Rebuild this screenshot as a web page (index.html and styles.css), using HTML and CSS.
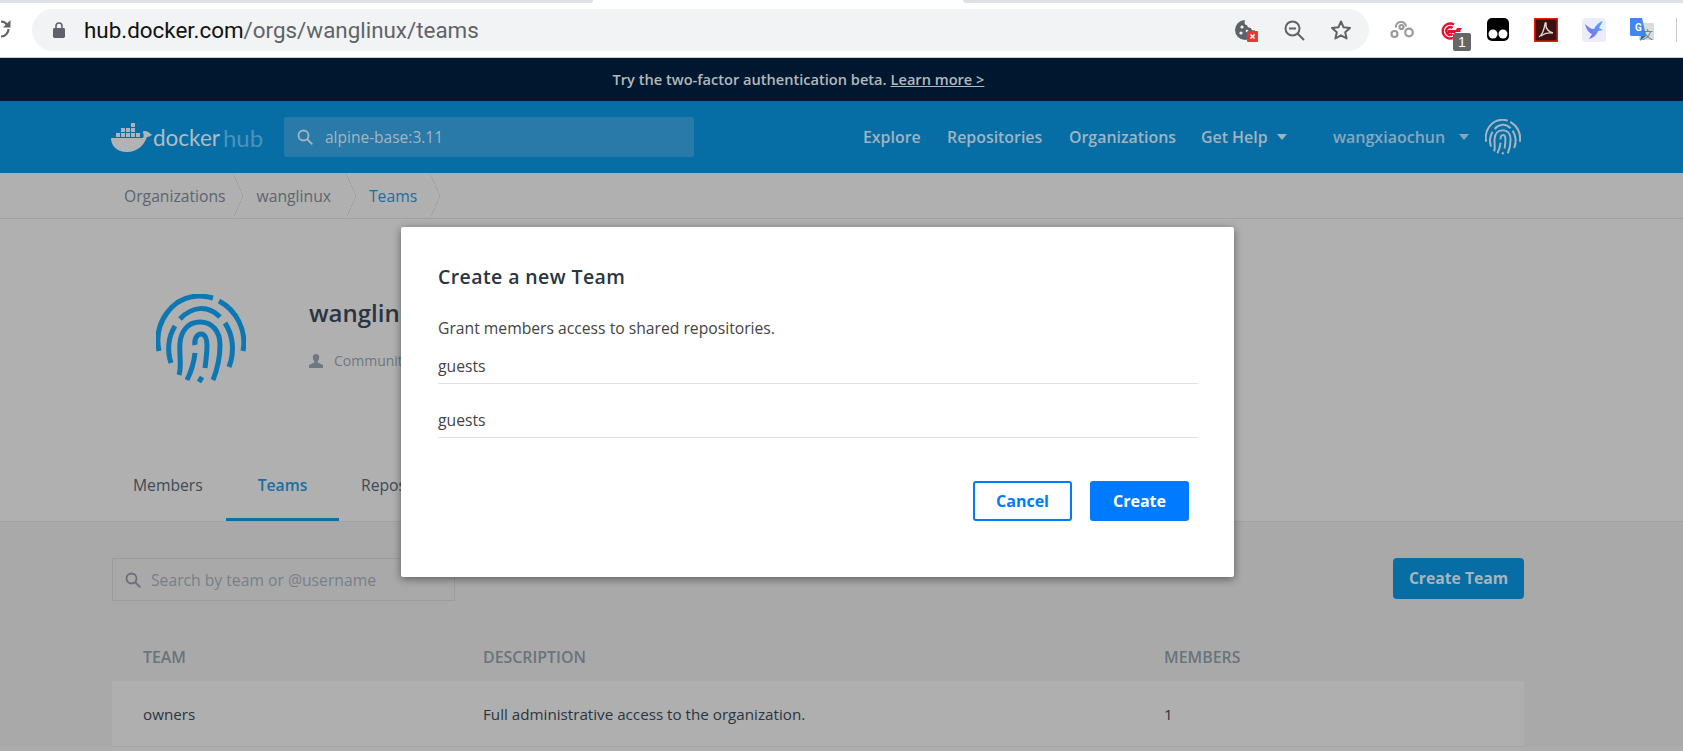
FILE: index.html
```html
<!DOCTYPE html>
<html lang="en">
<head>
    <meta charset="UTF-8">
    <title>Teams - Docker Hub</title>
    <link rel="stylesheet" href="styles.css">
</head>
<body>
    <!-- browser toolbar -->
    <div class="tabstrip">
        <div class="tab-curve"></div>
        <div class="tab-open"></div>
        <div class="tab-curve tab-curve-right"></div>
    </div>
    <div class="toolbar">
        <svg class="reload" width="11" height="22" viewBox="0 0 11 22"><path d="M1 3.5A7.5 7.5 0 0 1 7 6.500M8.500 11A7.5 7.5 0 0 1 1 18.500" fill="none" stroke="#5f6368" stroke-width="2.200"/><path d="M10.500 2v7.500H3z" fill="#5f6368"/></svg>
        <div class="omnibox">
            <svg class="lock" width="12" height="16" viewBox="0 0 12 16"><path d="M3 6V4a3 3 0 0 1 6 0v2" fill="none" stroke="#5f6368" stroke-width="1.600"/><rect y="6" width="12" height="10" rx="1.400" fill="#5f6368"/></svg>
            <span class="url"><b>hub.docker.com</b>/orgs/wanglinux/teams</span>
            <div class="omni-icons">
                <svg width="24" height="23" viewBox="0 0 24 23"><path d="M10 1a10 10 0 1 0 10 10c-2 1-4 0-4-2-2 0-4-1-4-3-2 0-3-2-2-5z" fill="#5f6368"/><circle cx="7" cy="8" r="1.600" fill="#f1f3f4"/><circle cx="6" cy="14" r="1.600" fill="#f1f3f4"/><circle cx="12" cy="12" r="1.300" fill="#f1f3f4"/><rect x="12" y="12" width="11" height="11" rx="1" fill="#e53935"/><path d="M15.500 15.500l4 4m0-4l-4 4" stroke="#fff" stroke-width="1.500"/></svg>
                <svg width="21" height="21" viewBox="0 0 21 21"><circle cx="8.500" cy="8.500" r="7" fill="none" stroke="#5f6368" stroke-width="2"/><path d="M5 8.500h7M13.500 13.500l6.500 6.500" stroke="#5f6368" stroke-width="2"/></svg>
                <svg width="22" height="22" viewBox="0 0 22 22"><path d="M11 2.500l2.600 5.800 6.400.7-4.800 4.200 1.400 6.300L11 16.300l-5.600 3.200 1.400-6.300L2 9l6.400-.7z" fill="none" stroke="#5f6368" stroke-width="2" stroke-linejoin="round"/></svg>
            </div>
        </div>
        <div class="extensions">
            <svg class="ext-chain" width="24" height="18" viewBox="0 0 24 18"><g fill="none" stroke="#9a9a9a" stroke-width="2.200"><path d="M6 6.500a5 5 0 0 1 10-1"/><circle cx="11.500" cy="6" r="2"/><circle cx="19" cy="11.500" r="3.800"/><circle cx="4.500" cy="13" r="3"/></g></svg>
            <div class="ext-target">
                <svg width="24" height="18" viewBox="0 0 24 18"><g fill="none" stroke="#e8112d" stroke-width="2.400"><path d="M15 2.500a7.500 7.500 0 1 0 0 13"/><path d="M13.500 6a3.800 3.800 0 1 0 0 6"/></g><path d="M9 8h8l1-2h5l-2 3 1 1h-5l-1 1H9z" fill="#e8112d"/></svg>
                <span class="ext-badge">1</span>
            </div>
            <svg class="ext-tamper" width="22" height="23" viewBox="0 0 22 23"><rect width="22" height="23" rx="5" fill="#000"/><circle cx="6" cy="16" r="4.500" fill="#fff"/><circle cx="16" cy="16" r="4.500" fill="#fff"/></svg>
            <svg class="ext-adobe" width="24" height="24" viewBox="0 0 24 24"><rect x=".75" y=".75" width="22.500" height="22.500" fill="#3a1212" stroke="#f41a00" stroke-width="1.500"/><path d="M5 19c3-2 5-7 6-13 .3-2 1.500-1.500 1 .5-.5 4 3 8 7 8.500-4-.5-9 .5-12 3" fill="none" stroke="#e7d6d0" stroke-width="1.400"/></svg>
            <svg class="ext-bird" width="24" height="24" viewBox="0 0 24 24"><defs><linearGradient id="birdFill" x1="1" y1="0" x2="0" y2="1"><stop offset="0" stop-color="#45b0f5"/><stop offset="1" stop-color="#8a63f0"/></linearGradient></defs><rect width="24" height="24" rx="4" fill="#ecedfb"/><path d="M21 3l-4 7 4 2-5 1c-1 4-5 7-9 8l3-5c-3-1-6-5-7-10 3 3 6 5 9 5 2-4 5-7 9-8z" fill="url(#birdFill)"/></svg>
            <svg class="ext-translate" width="24" height="24" viewBox="0 0 24 24"><rect x="9" y="5" width="15" height="17" fill="#dcdcdc"/><path d="M0 0h12l4 18H1.500a1.500 1.500 0 0 1-1.500-1.500z" fill="#4285f4"/><path d="M11 18l-1 5 6-5z" fill="#3367c5"/></svg>
            <span class="ext-g">G</span>
            <span class="ext-wen">文</span>
            <div class="ext-sep"></div>
        </div>
    </div>

    <div class="banner">
        <span>Try the two-factor authentication beta.</span> <a class="banner-link">Learn more &gt;</a>
    </div>

    <header class="topnav">
        <div class="logo">
            <svg width="41" height="29" viewBox="0 0 41 29"><g fill="#b0b4b6"><path d="M0 15h32c1-2 1-4-.5-6 1.500-1.500 4-1 5.500 0 1 .5 2.500 2 4 2.500-1 1.500-3 2.500-5 2.500-3 8-9 15-20 15C6 29 0 23 0 15z"/><rect x="5" y="10" width="4" height="4"/><rect x="10" y="10" width="4" height="4"/><rect x="15" y="10" width="4" height="4"/><rect x="20" y="10" width="4" height="4"/><rect x="25" y="10" width="4" height="4"/><rect x="10" y="5" width="4" height="4"/><rect x="15" y="5" width="4" height="4"/><rect x="20" y="5" width="4" height="4"/><rect x="20" y="0" width="4" height="4"/></g></svg>
            <span class="logo-docker">docker</span><span class="logo-hub">hub</span>
        </div>
        <div class="nav-search">
            <svg width="16" height="16" viewBox="0 0 16 16"><circle cx="6.500" cy="6.500" r="5" fill="none" stroke="#a9b5bc" stroke-width="1.800"/><path d="M10 10l5.300 5.300" stroke="#a9b5bc" stroke-width="1.800"/></svg>
            <span>alpine-base:3.11</span>
        </div>
        <nav class="nav-links">
            <a class="link-explore">Explore</a>
            <a class="link-repos">Repositories</a>
            <a class="link-orgs">Organizations</a>
            <a class="link-help">Get Help <i class="caret"></i></a>
        </nav>
        <div class="user-menu">
            <span class="username">wangxiaochun</span>
            <i class="caret"></i>
            <svg class="fp-small" width="36" height="36" viewBox="0 0 90 90"><use href="#fingerprint" stroke="#a3b5c0"/></svg>
        </div>
    </header>

    <div class="crumbs">
        <a class="crumb">Organizations</a>
        <a class="crumb">wanglinux</a>
        <a class="crumb crumb-active">Teams</a>
    </div>

    <section class="org-head">
        <svg class="fp-big" width="90" height="90" viewBox="0 0 90 90">
            <g id="fingerprint" fill="none" stroke-width="5">
                <path d="M3 57C-3 28 17 2 44 2c5 0 9 1 13 2"/>
                <path d="M63 7C80 16 91 36 87 57"/>
                <path d="M24 25C36 12 52 11 64 23"/>
                <path d="M19 32C12 43 11 57 15 69"/>
                <path d="M69 29C77 41 79 57 73 73"/>
                <path d="M23 81C26 72 23 62 24 49C25 36 33 28 44 28C56 28 64 37 64 51C64 64 61 76 57 86"/>
                <path d="M31 86C35 78 38 68 39 59"/>
                <path d="M39 51C38 45 41 40 45 40C49 40 51 45 51 51C51 59 50 66 49 74"/>
                <path d="M43 88l3-5"/>
            </g>
        </svg>
        <div class="org-info">
            <h1 class="org-name">wanglinux</h1>
            <div class="org-type">
                <svg width="14" height="14" viewBox="0 0 14 14"><path d="M7 0c2 0 3.200 1.500 3.200 3.500 0 1.600-.8 3-1.600 3.700v1.300L14 11v3H0v-3l5.400-2.500V7.200C4.600 6.500 3.800 5.100 3.800 3.500 3.800 1.500 5 0 7 0z" fill="#6d7880"/></svg>
                <span>Community</span>
            </div>
        </div>
    </section>

    <div class="tabs">
        <a class="page-tab">Members</a>
        <a class="page-tab page-tab-active">Teams</a>
        <a class="page-tab">Repositories</a>
    </div>

    <main class="content">
        <div class="team-tools">
            <div class="team-search">
                <svg width="16" height="16" viewBox="0 0 16 16"><circle cx="6.500" cy="6.500" r="5" fill="none" stroke="#687077" stroke-width="1.800"/><path d="M10 10l5.300 5.300" stroke="#687077" stroke-width="1.800"/></svg>
                <span>Search by team or @username</span>
            </div>
            <button class="btn-team" type="button">Create Team</button>
        </div>
        <div class="table-head">
            <div class="col-team">TEAM</div>
            <div class="col-desc">DESCRIPTION</div>
            <div>MEMBERS</div>
        </div>
        <div class="table-row">
            <div class="col-team">owners</div>
            <div class="col-desc">Full administrative access to the organization.</div>
            <div>1</div>
        </div>
    </main>

    <div class="modal">
        <h2 class="modal-title">Create a new Team</h2>
        <p class="modal-text">Grant members access to shared repositories.</p>
        <div class="field">guests</div>
        <div class="field">guests</div>
        <div class="modal-actions">
            <button class="btn btn-cancel" type="button">Cancel</button>
            <button class="btn btn-create" type="button">Create</button>
        </div>
    </div>
</body>
</html>
```

FILE: styles.css
```css
html, body {
    margin: 0;
    height: 751px;
    overflow: hidden;
}

body {
    position: relative;
    font-family: "Open Sans", sans-serif;
    font-size: 16px;
    background: #acacac;
    color: #2a3540;
}

/* browser chrome */
.tabstrip {
    height: 3px;
    display: flex;
    background: #fff;
}

.tab-curve {
    width: 593px;
    background: #dee1e6;
    border-radius: 0 0 8px 0;
}

.tab-open {
    width: 370px;
}

.tab-curve-right {
    flex: 1;
    border-radius: 0 0 0 8px;
}

.toolbar {
    height: 54px;
    display: flex;
    align-items: center;
    background: #fff;
    border-bottom: 1px solid #c9ccd0;
}

.reload {
    margin-right: 21px;
    margin-top: -2px;
    flex: none;
}

.omnibox {
    width: 1337px;
    height: 42px;
    display: flex;
    align-items: center;
    background: #f1f3f4;
    border-radius: 21px;
    flex: none;
}

.lock {
    margin-left: 21px;
    margin-right: 19px;
}

.url {
    font-family: Roboto, sans-serif;
    font-size: 22.4px;
    color: #5f6368;
}

.url b {
    font-weight: 400;
    color: #111;
}

.omni-icons {
    margin-left: auto;
    margin-right: 17px;
    display: flex;
    align-items: center;
    gap: 25px;
}

.extensions {
    position: relative;
    flex: 1;
    height: 100%;
}

/* extension icons sit on fixed spots in the toolbar */
.extensions > * {
    position: absolute;
}

.ext-chain { left: 21px; top: 18px; }
.ext-target { left: 70px; top: 19px; width: 34px; height: 32px; }
.ext-tamper { left: 118px; top: 15px; }
.ext-adobe { left: 165px; top: 15px; }
.ext-bird { left: 213px; top: 15px; }
.ext-translate { left: 261px; top: 15px; }

.ext-badge {
    position: absolute;
    left: 14px;
    top: 11px;
    width: 18px;
    height: 18px;
    background: #666;
    border-radius: 2px;
    color: #fff;
    font-family: "Liberation Sans", sans-serif;
    font-size: 14px;
    line-height: 18px;
    text-align: center;
}

.ext-g {
    left: 266px;
    top: 19px;
    font-family: Roboto, sans-serif;
    font-size: 10px;
    font-weight: 700;
    color: #fff;
}

.ext-wen {
    left: 273px;
    top: 24px;
    font-family: "Noto Sans CJK SC", sans-serif;
    font-size: 11px;
    line-height: 14px;
    color: #5d7a8c;
}

.ext-sep {
    left: 307px;
    top: 15px;
    width: 1px;
    height: 24px;
    background: #c8c8c8;
}

/* page */
.banner {
    height: 43px;
    padding: 0 86px 2px 0;
    box-sizing: border-box;
    display: flex;
    align-items: center;
    justify-content: center;
    gap: 4px;
    background: #00182f;
    color: #b4b8bc;
    font-size: 14.6px;
    font-weight: 600;
}

.banner-link {
    text-decoration: underline;
}

.topnav {
    height: 72px;
    display: flex;
    align-items: center;
    padding-left: 111px;
    background: #066da5;
    color: #a0b4c0;
}

.logo {
    display: flex;
    align-items: center;
    width: 173px;
    font-family: Lato, sans-serif;
}

.logo-docker {
    margin-left: 1px;
    font-size: 22.5px;
    color: #b0bcc4;
}

.logo-hub {
    margin-left: 3px;
    font-size: 24px;
    color: #4a93bb;
}

.nav-search {
    width: 397px;
    height: 40px;
    padding-left: 13px;
    display: flex;
    align-items: center;
    gap: 12px;
    background: #2979a9;
    color: #a9b5bc;
    border-radius: 2px;
    font-size: 15.5px;
}

.nav-links {
    display: flex;
    align-items: center;
    margin-left: 169px;
    font-size: 15.9px;
    font-weight: 600;
    white-space: nowrap;
}

.link-explore { width: 84px; }
.link-repos { width: 122px; }
.link-orgs { width: 132px; }
.link-help { width: 132px; }

.link-help .caret {
    margin-left: 5px;
    border-top-color: #a0b4c0;
}

.caret {
    display: inline-block;
    width: 0;
    height: 0;
    margin-left: 3px;
    vertical-align: 3px;
    border-left: 5.5px solid transparent;
    border-right: 5.5px solid transparent;
    border-top: 6px solid #8aa6b9;
}

.user-menu {
    display: flex;
    align-items: center;
    font-size: 16px;
    font-weight: 600;
}

.username {
    margin-right: 11px;
    color: #8aa6b9;
}

.fp-small {
    margin-left: 16px;
}

.crumbs {
    height: 46px;
    padding-left: 112px;
    display: flex;
    background: #b0b0b0;
    border-bottom: 1px solid #a0a0a0;
    box-sizing: border-box;
    color: #5c666e;
    font-size: 15.7px;
}

.crumb {
    position: relative;
    display: flex;
    align-items: center;
    padding: 0 25px 0 14px;
}

.crumb:first-child {
    padding: 0 17px 0 12px;
}

.crumb:last-child {
    padding: 0 23px 0 13px;
}

/* chevron between the crumbs */
.crumb::after {
    content: "";
    position: absolute;
    right: 0;
    top: 0;
    width: 10px;
    height: 46px;
    background: linear-gradient(to top right, transparent 48%, #a0a0a0 48%, #a0a0a0 52%, transparent 52%) 0 0 / 10px 23px no-repeat,
                linear-gradient(to bottom right, transparent 48%, #a0a0a0 48%, #a0a0a0 52%, transparent 52%) 0 23px / 10px 23px no-repeat;
}

.crumb-active {
    color: #1a6ea3;
}

.org-head {
    height: 220px;
    padding-left: 156px;
    display: flex;
    box-sizing: border-box;
    padding-top: 75px;
    background: #b0b0b0;
}

.fp-big {
    stroke: #0b77b3;
    flex: none;
}

.org-info {
    margin-left: 63px;
}

.org-name {
    margin: 0;
    margin-top: 2px;
    font-size: 24px;
    font-weight: 600;
    line-height: 34px;
}

.org-type {
    display: flex;
    align-items: center;
    gap: 11px;
    margin-top: 21px;
    color: #6d7880;
    font-size: 14px;
}

.tabs {
    height: 83px;
    padding-left: 113px;
    display: flex;
    box-sizing: border-box;
    background: #b0b0b0;
    border-bottom: 1px solid #a0a2a4;
    color: #3f4a54;
    font-size: 15.7px;
}

.page-tab {
    padding: 0 21px;
    line-height: 92px;
    height: 82px;
    box-sizing: border-box;
    overflow: hidden;
}

.page-tab:nth-child(1) { width: 113px; padding-left: 20px; }
.page-tab:nth-child(2) { width: 113px; padding: 0; text-align: center; }
.page-tab:nth-child(3) { padding-left: 22px; }

.page-tab-active {
    color: #1a6ea3;
    font-weight: 600;
    border-bottom: 3px solid #0b6fa8;
}

.content {
    padding: 36px 159px 0 112px;
    background: #a9a9a9;
}

.team-tools {
    display: flex;
    justify-content: space-between;
    align-items: flex-start;
}

.team-search {
    width: 343px;
    height: 43px;
    padding-left: 12px;
    display: flex;
    align-items: center;
    gap: 10px;
    box-sizing: border-box;
    border: 1px solid #989da2;
    color: #788087;
    font-size: 15.7px;
}

.btn-team {
    width: 131px;
    height: 41px;
    padding: 0 0 2px;
    border: 0;
    border-radius: 4px;
    background: #066da5;
    color: #a8b5bd;
    font-family: inherit;
    font-size: 15.7px;
    font-weight: 700;
}

.table-head,
.table-row {
    display: flex;
}

.table-head {
    height: 80px;
    padding-top: 45px;
    box-sizing: border-box;
    color: #6a747c;
    font-size: 15.9px;
    font-weight: 600;
}

.table-row {
    height: 66px;
    align-items: center;
    box-sizing: border-box;
    background: #afafaf;
    border-bottom: 1px solid #a0a4a6;
    font-size: 15.2px;
}

.col-team {
    width: 340px;
    margin-left: 31px;
}

.col-desc {
    width: 681px;
    flex: none;
}

/* dialog */
.modal {
    position: absolute;
    left: 401px;
    top: 227px;
    width: 833px;
    height: 350px;
    box-sizing: border-box;
    padding: 37px 36px 0 37px;
    background: #fff;
    border-radius: 2px;
    box-shadow: 0 2px 8px rgba(0, 0, 0, 0.45);
}

.modal-title {
    margin: 0;
    font-size: 19.5px;
    font-weight: 600;
    line-height: 26px;
    letter-spacing: 0.4px;
    color: #2a3540;
}

.modal-text {
    margin: 26px 0 0;
    font-size: 15.7px;
    line-height: 24px;
    color: #444;
}

.field {
    margin-top: 24px;
    padding-bottom: 5px;
    border-bottom: 1px solid #dfe1e3;
    font-size: 15.7px;
    line-height: 24px;
    color: #444;
}

.modal-text + .field {
    margin-top: 14px;
}

.modal-actions {
    display: flex;
    justify-content: flex-end;
    gap: 18px;
    margin-top: 43px;
    padding-right: 9px;
}

.btn {
    width: 99px;
    height: 40px;
    border-radius: 3px;
    font-family: inherit;
    font-size: 16px;
    font-weight: 700;
}

.btn-cancel {
    background: #fff;
    border: 2px solid #007bff;
    color: #007bff;
}

.btn-create {
    background: #007bff;
    border: 0;
    color: #fff;
}
```
